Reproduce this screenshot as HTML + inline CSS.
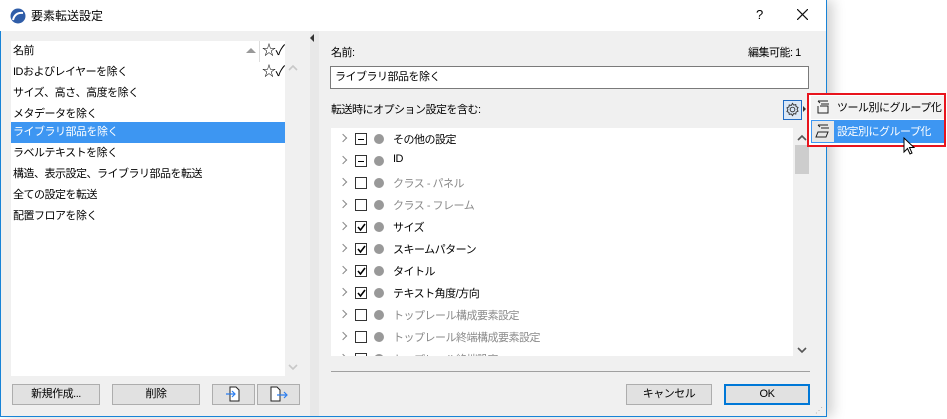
<!DOCTYPE html>
<html><head><meta charset="utf-8"><style>
*{margin:0;padding:0;box-sizing:border-box}
body{width:947px;height:417px;position:relative;background:#fff;font-family:"Liberation Sans","Noto Sans CJK JP",sans-serif;font-size:11px;letter-spacing:-0.5px;color:#000;overflow:hidden}
.abs{position:absolute}
.win{left:0;top:0;width:827px;height:417px;border:1px solid #1883d7;border-top:none;background:#f0f0f0;box-shadow:6px 0 12px rgba(0,0,0,.18)}
.title{left:0;top:0;width:826px;height:31px;background:#fff}
.t{position:absolute;white-space:nowrap;line-height:16px}
.list{left:11px;top:41px;width:274px;height:335px;background:#fff}
.row{position:absolute;left:0;width:274px;height:21px;padding-left:2px;line-height:21px}
.btn{position:absolute;height:21px;background:#e1e1e1;border:1px solid #adadad;text-align:center;line-height:19px}
.tree{left:331px;top:128px;width:462px;height:228px;background:#fff;overflow:hidden}
.tr{position:absolute;left:0;height:22px;width:462px}
.chev{position:absolute;left:9px;top:7px;width:6px;height:6px;border-right:1.5px solid #888;border-bottom:1.5px solid #888;transform:rotate(-45deg)}
.cb{position:absolute;left:24px;top:5px;width:12px;height:12px;border:1px solid #333;background:#fff}
.dot{position:absolute;left:43px;top:6px;width:10px;height:10px;border-radius:50%;background:#999}
.lbl{position:absolute;left:62px;top:3px;white-space:nowrap}
.g{color:#8a8a8a}
</style></head><body>
<div class="abs win"></div>
<div class="abs title"></div>
<svg class="abs" style="left:10px;top:8px" width="16" height="16" viewBox="0 0 16 16"><circle cx="8" cy="8" r="7.5" fill="#2f5da8"/><path d="M3 12 Q5 4 13 5" stroke="#fff" stroke-width="2" fill="none"/></svg>
<div class="t" style="left:31px;top:8px;font-size:12px;letter-spacing:0">要素転送設定</div>
<div class="t" style="left:756px;top:7px;font-size:13px">?</div>
<svg class="abs" style="left:797px;top:9px" width="11" height="11"><path d="M0 0L11 11M11 0L0 11" stroke="#111" stroke-width="1.2"/></svg>

<div class="abs list">
 <div class="row" style="top:0">名前</div>
 <div class="abs" style="left:235px;top:7px;width:0;height:0;border-left:5px solid transparent;border-right:5px solid transparent;border-bottom:5px solid #999"></div>
 <div class="abs" style="left:248px;top:0;width:1px;height:21px;background:#ddd"></div>
 <div class="t" style="left:251px;top:1px;font-size:14px">☆✓</div>
 <div class="row" style="top:21px">IDおよびレイヤーを除く</div>
 <div class="t" style="left:251px;top:22px;font-size:14px">☆✓</div>
 <div class="row" style="top:42px">サイズ、高さ、高度を除く</div>
 <div class="row" style="top:63px">メタデータを除く</div>
 <div class="row" style="top:81px;background:#3d96f2;color:#fff">ライブラリ部品を除く</div>
 <div class="row" style="top:102px">ラベルテキストを除く</div>
 <div class="row" style="top:123px">構造、表示設定、ライブラリ部品を転送</div>
 <div class="row" style="top:144px">全ての設定を転送</div>
 <div class="row" style="top:165px">配置フロアを除く</div>
</div>
<svg class="abs" style="left:288px;top:64px" width="10" height="7"><path d="M1 6l4-4 4 4" stroke="#c8c8c8" stroke-width="1.6" fill="none"/></svg>
<svg class="abs" style="left:288px;top:364px" width="10" height="7"><path d="M1 1l4 4 4-4" stroke="#c8c8c8" stroke-width="1.6" fill="none"/></svg>
<div class="abs" style="left:310px;top:31px;width:9px;height:385px;background:#e8e8e8"></div>
<div class="abs" style="left:310px;top:34px;width:0;height:0;border-top:4px solid transparent;border-bottom:4px solid transparent;border-right:4px solid #333"></div>

<div class="btn" style="left:12px;top:384px;width:88px">新規作成...</div>
<div class="btn" style="left:112px;top:384px;width:88px">削除</div>
<div class="btn" style="left:212px;top:384px;width:43px"><svg width="20" height="18" viewBox="0 0 20 18"><path d="M6 2h6l3 3v11H6z" fill="#fff" stroke="#222"/><path d="M2 9h9M8 6l3 3-3 3" stroke="#2b7ef0" fill="none" stroke-width="1.2"/></svg></div>
<div class="btn" style="left:257px;top:384px;width:43px"><svg width="22" height="18" viewBox="0 0 22 18"><path d="M3 2h6l3 3v11H3z" fill="#fff" stroke="#222"/><path d="M9 10h10M16 7l3 3-3 3" stroke="#2b7ef0" fill="none" stroke-width="1.2"/></svg></div>

<div class="t" style="left:331px;top:45px">名前:</div>
<div class="t" style="left:748px;top:45px">編集可能: 1</div>
<div class="abs" style="left:330px;top:66px;width:479px;height:23px;background:#fff;border:1px solid #7a7a7a"></div>
<div class="t" style="left:335px;top:69px">ライブラリ部品を除く</div>
<div class="t" style="left:331px;top:102px">転送時にオプション設定を含む:</div>
<div class="abs" style="left:783px;top:100px;width:19px;height:20px;border:1px solid #1f6bc4;background:#dbe8f7"></div>
<svg class="abs" style="left:785px;top:102px" width="15" height="15" viewBox="0 0 16 16"><circle cx="8" cy="8" r="2.5" fill="none" stroke="#333"/><path d="M8 1.5l1.3 1.8 2.2-.6.3 2.2 2.1.9-1 2 1 2-2.1.9-.3 2.2-2.2-.6L8 14.5l-1.3-1.8-2.2.6-.3-2.2-2.1-.9 1-2-1-2 2.1-.9.3-2.2 2.2.6z" fill="none" stroke="#333"/></svg>
<div class="abs" style="left:803px;top:106px;border-top:3px solid transparent;border-bottom:3px solid transparent;border-left:3px solid #333"></div>

<div class="abs tree">
 <div class="tr" style="top:0"><div class="chev"></div><div class="cb"><div class="abs" style="left:2px;top:5px;width:6px;height:1px;background:#000"></div></div><div class="dot"></div><div class="lbl">その他の設定</div></div>
 <div class="tr" style="top:22px"><div class="chev"></div><div class="cb"><div class="abs" style="left:2px;top:5px;width:6px;height:1px;background:#000"></div></div><div class="dot"></div><div class="lbl">ID</div></div>
 <div class="tr" style="top:44px"><div class="chev"></div><div class="cb"></div><div class="dot"></div><div class="lbl g">クラス - パネル</div></div>
 <div class="tr" style="top:66px"><div class="chev"></div><div class="cb"></div><div class="dot"></div><div class="lbl g">クラス - フレーム</div></div>
 <div class="tr" style="top:88px"><div class="chev"></div><div class="cb"><svg class="abs" style="left:1px;top:1px" width="9" height="9"><path d="M1 4l2.5 3L8 1" stroke="#000" stroke-width="1.6" fill="none"/></svg></div><div class="dot"></div><div class="lbl">サイズ</div></div>
 <div class="tr" style="top:110px"><div class="chev"></div><div class="cb"><svg class="abs" style="left:1px;top:1px" width="9" height="9"><path d="M1 4l2.5 3L8 1" stroke="#000" stroke-width="1.6" fill="none"/></svg></div><div class="dot"></div><div class="lbl">スキームパターン</div></div>
 <div class="tr" style="top:132px"><div class="chev"></div><div class="cb"><svg class="abs" style="left:1px;top:1px" width="9" height="9"><path d="M1 4l2.5 3L8 1" stroke="#000" stroke-width="1.6" fill="none"/></svg></div><div class="dot"></div><div class="lbl">タイトル</div></div>
 <div class="tr" style="top:154px"><div class="chev"></div><div class="cb"><svg class="abs" style="left:1px;top:1px" width="9" height="9"><path d="M1 4l2.5 3L8 1" stroke="#000" stroke-width="1.6" fill="none"/></svg></div><div class="dot"></div><div class="lbl">テキスト角度/方向</div></div>
 <div class="tr" style="top:176px"><div class="chev"></div><div class="cb"></div><div class="dot"></div><div class="lbl g">トップレール構成要素設定</div></div>
 <div class="tr" style="top:198px"><div class="chev"></div><div class="cb"></div><div class="dot"></div><div class="lbl g">トップレール終端構成要素設定</div></div>
 <div class="tr" style="top:220px"><div class="chev"></div><div class="cb"></div><div class="dot"></div><div class="lbl g">トップレール終端設定</div></div>
</div>
<div class="abs" style="left:793px;top:128px;width:16px;height:228px;background:#f0f0f0"></div>
<div class="abs" style="left:795px;top:145px;width:14px;height:29px;background:#cdcdcd"></div>
<svg class="abs" style="left:797px;top:134px" width="10" height="7"><path d="M1 6l4-4 4 4" stroke="#555" stroke-width="1.6" fill="none"/></svg>
<svg class="abs" style="left:797px;top:347px" width="10" height="7"><path d="M1 1l4 4 4-4" stroke="#555" stroke-width="1.6" fill="none"/></svg>
<div class="abs" style="left:331px;top:371px;width:479px;height:1px;background:#a0a0a0"></div>
<div class="btn" style="left:626px;top:384px;width:86px">キャンセル</div>
<div class="btn" style="left:724px;top:384px;width:86px;border:2px solid #0078d7;line-height:17px">OK</div>
<div class="t" style="left:815px;top:403px;font-size:8px;color:#aaa">⋰</div>

<div class="abs" style="left:807px;top:93px;width:139px;height:54px;border:2px solid #e8141d;background:#fff">
 <div class="abs" style="left:2px;top:1px;width:133px;height:23px;background:#f2f2f2"></div>
 <div class="abs" style="left:2px;top:25px;width:133px;height:23px;background:#3d96f2"></div>
 <div class="abs" style="left:3px;top:26px;width:22px;height:21px;background:#e8e8e8"></div>
 <svg class="abs" style="left:6px;top:4px" width="16" height="16"><path d="M3 2h10M3 2l2 2M6 5h8M5 7h8v7H3V7" stroke="#222" fill="none"/></svg>
 <svg class="abs" style="left:6px;top:28px" width="16" height="16"><path d="M3 2h10M3 2l2 2M6 5h8M3 9h10l-2 5H1z" stroke="#222" fill="none"/></svg>
 <div class="t" style="left:28px;top:5px">ツール別にグループ化</div>
 <div class="t" style="left:28px;top:29px;color:#fff">設定別にグループ化</div>
</div>
<svg class="abs" style="left:903px;top:137px" width="14" height="20"><path d="M1 1v14l3.5-3.5 2.5 5.5 2-1-2.5-5.5H11z" fill="#fff" stroke="#000"/></svg>
</body></html>
